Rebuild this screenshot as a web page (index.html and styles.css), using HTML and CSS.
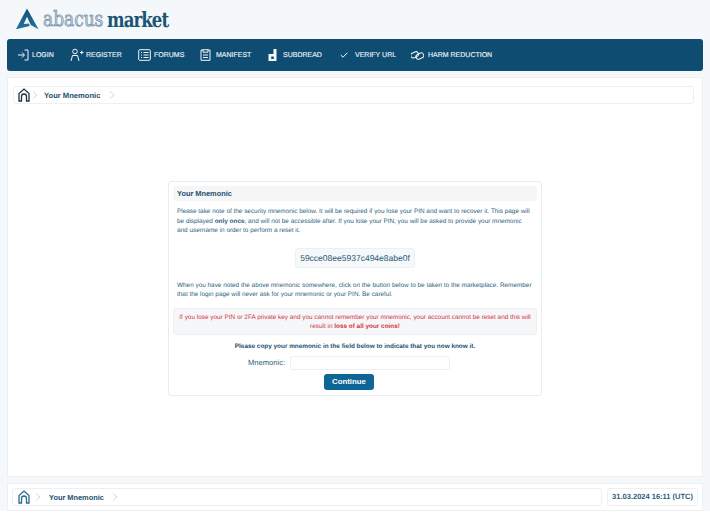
FILE: index.html
```html
<!DOCTYPE html>
<html lang="en">
<head>
<meta charset="utf-8">
<title>Your Mnemonic</title>
<link rel="stylesheet" href="styles.css">
</head>
<body>
<div class="page">
  <header class="brand">
    <svg class="logo" width="24" height="24" viewBox="0 0 26 24"><defs><linearGradient id="g" x1="0" y1="0" x2="0" y2="1"><stop offset="0" stop-color="#1a4f70"/><stop offset="1" stop-color="#1f74a3"/></linearGradient></defs><path d="M13 0.500 L25.500 23 L17 18.500 L13 9.500 L9.500 17.500 L15 17 L16 19.500 L1 23 Z" fill="url(#g)"/></svg>
    <span class="brand-a">abacus</span>
    <span class="brand-b">market</span>
  </header>
  <nav class="nav">
    <a class="nav-item i-login"><svg width="12" height="12" viewBox="0 0 12 12"><path d="M1 6h6M5 3.500 7.500 6 5 8.500M7.500 1H11v10H7.500" /></svg>LOGIN</a>
    <a class="nav-item i-reg"><svg width="14" height="14" viewBox="0 0 14 14"><circle cx="5" cy="3.500" r="2.300"/><path d="M1 13 2.500 7.500h5L9 13M10 4.500h3.500M11.750 2.750v3.500"/></svg>REGISTER</a>
    <a class="nav-item i-forums"><svg width="13" height="12" viewBox="0 0 13 12"><rect x=".7" y=".7" width="11.600" height="10.600" rx="1"/><path d="M3 3.500h1M3 6h1M3 8.500h1M5.500 3.500h5M5.500 6h5M5.500 8.500h5"/></svg>FORUMS</a>
    <a class="nav-item i-man"><svg width="11" height="12" viewBox="0 0 11 12"><path d="M3 1H1v10.300h9V1H8M3 .7h5v2.500H3zM3 6h5M3 8.500h5"/></svg>MANIFEST</a>
    <a class="nav-item i-sub"><svg class="solid" width="9" height="12" viewBox="0 0 9 12"><path d="M5.500 0H8.500V12H.5V5H5.500ZM3.200 7.500V10H5.800V7.500Z" fill-rule="evenodd"/></svg>SUBDREAD</a>
    <a class="nav-item i-ver"><svg width="8" height="6" viewBox="0 0 8 6"><path d="M.7 3 3 5.200 7.300 .8"/></svg>VERIFY URL</a>
    <a class="nav-item i-harm"><svg width="13" height="11" viewBox="0 0 13 11"><rect x="-.3" y="2.200" width="8" height="5" rx="2.500" transform="rotate(-25 4 5)"/><rect x="4.800" y="3.500" width="8" height="5" rx="2.500" transform="rotate(-25 9 6)"/></svg>HARM REDUCTION</a>
  </nav>
  <main class="panel main">
    <div class="crumbs top">
      <svg class="home" width="12" height="14" viewBox="0 0 12 14"><path d="M1 13V5.500L6 1l5 4.500V13H8.500V8.500a2.500 2.500 0 0 0-5 0V13Z"/></svg>
      <svg class="chev" width="6" height="8" viewBox="0 0 6 8"><path d="M1 .5 5 4 1 7.500"/></svg>
      <span class="crumb-text">Your Mnemonic</span>
      <svg class="chev" width="6" height="8" viewBox="0 0 6 8"><path d="M1 .5 5 4 1 7.500"/></svg>
    </div>
    <section class="card">
      <h2 class="card-title">Your Mnemonic</h2>
      <p class="copy first">Please take note of the security mnemonic below. It will be required if you lose your PIN and want to recover it. This page will be displayed <b>only once</b>, and will not be accessible after. If you lose your PIN, you will be asked to provide your mnemonic and username in order to perform a reset it.</p>
      <div class="code-row"><span class="code">59cce08ee5937c494e8abe0f</span></div>
      <p class="copy">When you have noted the above mnemonic somewhere, click on the button below to be taken to the marketplace. Remember that the login page will never ask for your mnemonic or your PIN. Be careful.</p>
      <div class="warn">If you lose your PIN or 2FA private key and you cannot remember your mnemonic, your account cannot be reset and this will result in <b>loss of all your coins!</b></div>
      <p class="prompt">Please copy your mnemonic in the field below to indicate that you now know it.</p>
      <div class="field"><label class="field-label" for="m">Mnemonic:</label><input class="field-input" id="m" type="text"></div>
      <div class="actions"><button class="btn" type="button">Continue</button></div>
    </section>
  </main>
  <footer class="panel foot">
    <div class="crumbs bottom">
      <svg class="home alt" width="12" height="14" viewBox="0 0 12 14"><path d="M1 13V5.500L6 1l5 4.500V13H8.500V8.500a2.500 2.500 0 0 0-5 0V13Z"/></svg>
      <svg class="chev" width="6" height="8" viewBox="0 0 6 8"><path d="M1 .5 5 4 1 7.500"/></svg>
      <span class="crumb-text">Your Mnemonic</span>
      <svg class="chev" width="6" height="8" viewBox="0 0 6 8"><path d="M1 .5 5 4 1 7.500"/></svg>
    </div>
    <div class="date">31.03.2024 16:11 (UTC)</div>
  </footer>
</div>
</body>
</html>
```

FILE: styles.css
```css
* { box-sizing: border-box; }
html, body { margin: 0; padding: 0; background: #fff; }
body { font-family: "Liberation Sans", Arial, sans-serif; color: #1d4f6e; overflow: hidden; text-rendering: geometricPrecision; }
.page { height: 511px; background: #f5f8fb; padding: 0 7px; }

.brand { height: 39px; display: flex; align-items: center; padding: 0 0 2px 8px; }
.logo { flex: none; margin-right: 4px; }
.brand-a, .brand-b { display: inline-block; font-size: 21px; line-height: 1; font-family: "DejaVu Serif Condensed", "DejaVu Serif", serif; white-space: nowrap; transform-origin: left center; margin-top: 2px; }
.brand-a { width: 64px; font-weight: 400; color: #c7d5e0; -webkit-text-stroke: .6px #5d7f99; transform: scaleX(.9); }
.brand-b { font-weight: 700; color: #1c5474; letter-spacing: -1.1px; transform: scaleX(.88); }

.nav { height: 32px; background: #0f4c72; border-radius: 3px; display: flex; align-items: center; padding: 0 0 0 10px; }
.nav-item { display: flex; align-items: center; gap: 3px; color: #e8f0f5; font-size: 7px; -webkit-text-stroke: .15px #e8f0f5; white-space: nowrap; }
.nav-item svg { fill: none; stroke: #f2f6f9; stroke-width: 1; flex: none; }
.nav-item svg.solid { fill: #f6f8fa; stroke: none; }
.i-login { width: 53px; }
.i-reg { width: 68px; gap: 2px; }
.i-forums { width: 62px; gap: 3px; }
.i-man { width: 68px; gap: 5px; }
.i-sub { width: 72px; gap: 6px; }
.i-ver { width: 71px; gap: 7px; }
.i-harm { gap: 4px; }

.panel { background: #fff; border: 1px solid #edf0f3; }
.main { height: 400px; margin-top: 6px; padding: 8px 8px 0 5px; }
.crumbs { display: flex; align-items: center; background: #fff; border: 1px solid #edf0f3; border-radius: 3px; height: 18px; }
.top { padding-left: 4px; }
.crumb-text { font-size: 7.600px; font-weight: 700; color: #1d4f6e; }
.home { fill: none; stroke: #26323a; stroke-width: 1.300; flex: none; }
.home.alt { stroke: #2d6a8f; }
.chev { fill: none; stroke: #c6ced4; stroke-width: .8; flex: none; }
.top .chev { margin-left: 2px; }
.top .crumb-text { margin: 0 7px 0 6px; }

.card { width: 374px; height: 215px; margin: 77px 0 0 155px; border: 1px solid #e9edf0; border-radius: 3px; padding: 4px; }
.card-title { margin: 0; height: 15px; padding-left: 4px; background: #f4f6f8; border-radius: 3px; font-size: 7.400px; line-height: 15px; font-weight: 700; color: #1d4f6e; }
.copy { margin: 3px 4px 0; font-size: 6.400px; line-height: 9.500px; color: #2d5f7e; }
.copy.first { margin-top: 6px; }
.code-row { display: flex; justify-content: center; margin: 12px 0 13px; }
.code { width: 120px; height: 20px; text-align: center; background: #f6f8fa; border: 1px solid #edf0f3; border-radius: 3px; font-size: 8.500px; line-height: 18px; color: #2a5a78; white-space: nowrap; }
.warn { margin-top: 8px; height: 27px; background: #f6f7f9; border: 1px solid #eeeff2; border-radius: 3px; padding: 4px 2px 0; text-align: center; font-size: 6.400px; line-height: 9px; color: #d2323f; }
.prompt { margin: 7px 0 0; text-align: center; font-size: 6.400px; line-height: 10px; font-weight: 700; color: #1d4f6e; }
.field { display: flex; justify-content: center; align-items: center; margin-top: 4px; padding-right: 12px; }
.field-label { font-size: 7.600px; color: #2d5f7e; margin-right: 5px; }
.field-input { width: 160px; height: 14px; background: #fff; border: 1px solid #edf0f3; border-radius: 3px; padding: 0; }
.actions { display: flex; justify-content: center; margin-top: 4px; padding-right: 12px; }
.btn { width: 50px; height: 16px; background: #0f6696; color: #fff; border: 0; border-radius: 3px; font: 700 7.800px/16px "Liberation Sans", Arial, sans-serif; padding: 0; }

.foot { height: 28px; margin-top: 6px; display: flex; align-items: center; padding: 0 4px; gap: 5px; }
.bottom { width: 591px; padding-left: 5px; }
.bottom .chev { margin-left: 5px; }
.bottom .crumb-text { margin: 0 3px 0 8px; font-size: 7.400px; }
.date { width: 91px; height: 18px; border: 1px solid #edf0f3; border-radius: 3px; text-align: center; font-size: 7.500px; font-weight: 700; line-height: 16px; color: #2d5f7e; white-space: nowrap; }
```
